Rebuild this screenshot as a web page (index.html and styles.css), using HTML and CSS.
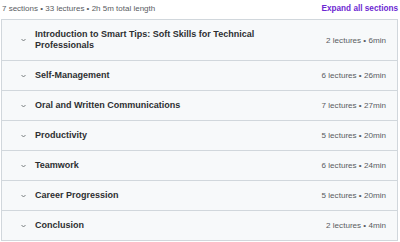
FILE: index.html
```html
<!DOCTYPE html>
<html>
<head>
<title>Course content</title>
<link rel="stylesheet" href="styles.css">
</head>
<body>
<div class="summary">
<span class="summary-text">7 sections &bull; 33 lectures &bull; 2h 5m total length</span>
<span class="expand">Expand all sections</span>
</div>

<div class="sections">
<div class="section">
<svg class="chevron" width="5" height="4" viewBox="0 0 5 4"><polyline points="0.5,1 2.5,3 4.5,1"/></svg>
<span class="sec-title wide">Introduction to Smart Tips: Soft Skills for Technical Professionals</span>
<span class="sec-meta">2 lectures &bull; 6min</span>
</div>
<div class="section">
<svg class="chevron" width="5" height="4" viewBox="0 0 5 4"><polyline points="0.5,1 2.5,3 4.5,1"/></svg>
<span class="sec-title">Self-Management</span>
<span class="sec-meta">6 lectures &bull; 26min</span>
</div>
<div class="section">
<svg class="chevron" width="5" height="4" viewBox="0 0 5 4"><polyline points="0.5,1 2.5,3 4.5,1"/></svg>
<span class="sec-title">Oral and Written Communications</span>
<span class="sec-meta">7 lectures &bull; 27min</span>
</div>
<div class="section">
<svg class="chevron" width="5" height="4" viewBox="0 0 5 4"><polyline points="0.5,1 2.5,3 4.5,1"/></svg>
<span class="sec-title">Productivity</span>
<span class="sec-meta">5 lectures &bull; 20min</span>
</div>
<div class="section">
<svg class="chevron" width="5" height="4" viewBox="0 0 5 4"><polyline points="0.5,1 2.5,3 4.5,1"/></svg>
<span class="sec-title">Teamwork</span>
<span class="sec-meta">6 lectures &bull; 24min</span>
</div>
<div class="section">
<svg class="chevron" width="5" height="4" viewBox="0 0 5 4"><polyline points="0.5,1 2.5,3 4.5,1"/></svg>
<span class="sec-title">Career Progression</span>
<span class="sec-meta">5 lectures &bull; 20min</span>
</div>
<div class="section">
<svg class="chevron" width="5" height="4" viewBox="0 0 5 4"><polyline points="0.5,1 2.5,3 4.5,1"/></svg>
<span class="sec-title">Conclusion</span>
<span class="sec-meta">2 lectures &bull; 4min</span>
</div>
</div>
</body>
</html>
```

FILE: styles.css
```css
/* Course content accordion, collapsed */

body
{ margin: 0;
background-color: white;
font-family: "Liberation Sans", Arial, sans-serif;
color: #2d2f31;
}

div.summary
{ display: flex;
justify-content: space-between;
align-items: center;
height: 17px;
padding: 0 2px;
margin-bottom: 2px;
}

span.summary-text
{ font-size: 8px;
color: #595c5f;
}

span.expand
{ font-size: 8.2px;
color: #6d28d2;
font-weight: bold;
}

div.sections
{ width: 395px;
margin-left: 1px;
border: 1px solid #d1d7dc;
border-top: none;
background-color: #f7f9fa;
}

div.section
{ display: flex;
align-items: center;
border-top: 1px solid #d1d7dc;
padding: 9px 11px 9px 19px;
line-height: 11px;
}

svg.chevron
{ flex: none;
margin-right: 9px;
fill: none;
stroke: #6a6f73;
stroke-width: 0.9;
}

span.sec-title
{ flex: 1;
font-size: 9px;
font-weight: bold;
}

span.sec-title.wide
{ padding-right: 40px;
}

span.sec-meta
{ flex: none;
font-size: 8.1px;
color: #595c5f;
}
```
